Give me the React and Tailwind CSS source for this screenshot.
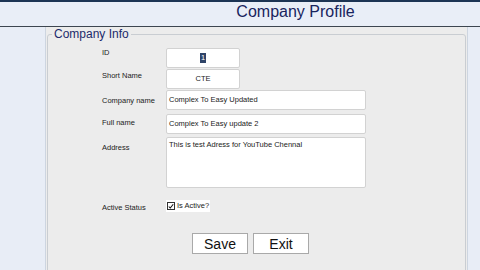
import React from 'react';

const font = { fontFamily: '"Liberation Sans", Arial, sans-serif' };

const Label = ({ children, className = '' }) => (
  <div className={`w-[64px] shrink-0 text-[7.5px] leading-[10px] text-[#222] ${className}`}>{children}</div>
);

const App = () => {
  return (
    <div className="w-[480px] h-[270px] overflow-hidden bg-[#e8edf6]" style={font}>
      {/* Header */}
      <div className="h-[27px] border-t-2 border-b border-t-[#1c3454] border-b-[#3d4650] bg-[#e9eef7] flex justify-center pl-[111px]">
        <h1 className="text-[16px] leading-[20px] text-[#18245e]">Company Profile</h1>
      </div>

      {/* Panel */}
      <div className="flex pl-[45px]">
        <div className="w-[423px] h-[243px] border-x border-[#cdd5e0] bg-[#ececec] px-[1px]">
          <fieldset className="border border-[#c9cdd2] rounded-[3px] h-[300px]">
            <legend className="ml-[4px] px-[2px] text-[12px] leading-[14px] text-[#1c2a6b]">Company Info</legend>

            <div className="pl-[54px]">
              {/* ID */}
              <div className="flex mt-[7px]">
                <Label>ID</Label>
                <div className="w-[74px] h-[20px] bg-white border border-[#d2d2d2] rounded-[2px] flex items-center justify-center text-[7.5px]">
                  <span className="bg-[#2f4468] text-white px-[1px] leading-[10px]">1</span>
                </div>
              </div>

              {/* Short Name */}
              <div className="flex mt-[1px]">
                <Label className="mt-[2px]">Short Name</Label>
                <div className="w-[74px] h-[20px] bg-white border border-[#d2d2d2] rounded-[2px] flex items-center justify-center text-[7.5px] text-[#222]">
                  CTE
                </div>
              </div>

              {/* Company name */}
              <div className="flex mt-[1px]">
                <Label className="mt-[6px]">Company name</Label>
                <div className="w-[200px] h-[20px] bg-white border border-[#d2d2d2] rounded-[2px] flex items-center px-[2px] text-[7.5px] text-[#222]">
                  Complex To Easy Updated
                </div>
              </div>

              {/* Full name */}
              <div className="flex mt-[4px]">
                <Label className="mt-[4px]">Full name</Label>
                <div className="w-[200px] h-[20px] bg-white border border-[#d2d2d2] rounded-[2px] flex items-center px-[2px] text-[7.5px] text-[#222]">
                  Complex To Easy update 2
                </div>
              </div>

              {/* Address */}
              <div className="flex mt-[3px]">
                <Label className="mt-[6px]">Address</Label>
                <div className="w-[200px] h-[51px] bg-white border border-[#d2d2d2] rounded-[2px] px-[2px] pt-[2px] text-[7.5px] leading-[10px] text-[#222]">
                  This is test Adress for YouTube Chennal
                </div>
              </div>

              {/* Active Status */}
              <div className="flex mt-[12px]">
                <Label className="mt-[3px]">Active Status</Label>
                <div className="flex items-center h-[12px] bg-white pr-[1px] text-[7.5px] text-[#222]">
                  <span className="w-[8px] h-[8px] ml-[1px] mr-[2px] border border-[#333] bg-white flex items-center justify-center">
                    <svg viewBox="0 0 8 8" className="w-[7px] h-[7px]">
                      <path d="M1 4 L3 6 L7 1" fill="none" stroke="#111" strokeWidth="1.4" />
                    </svg>
                  </span>
                  Is Active?
                </div>
              </div>

              {/* Buttons */}
              <div className="flex mt-[20px] pl-[90px] gap-[5px]">
                <button className="w-[56px] h-[21px] bg-white border border-[#a9a9a9] text-[14px] leading-[18px] text-[#111]">Save</button>
                <button className="w-[56px] h-[21px] bg-white border border-[#a9a9a9] text-[14px] leading-[18px] text-[#111]">Exit</button>
              </div>
            </div>
          </fieldset>
        </div>
      </div>
    </div>
  );
};

export default App;
